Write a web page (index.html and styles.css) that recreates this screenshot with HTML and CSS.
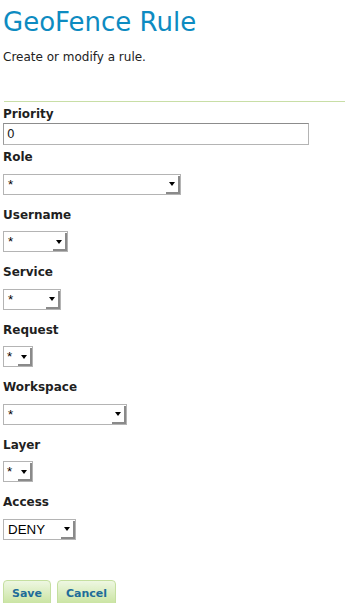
FILE: index.html
```html
<!DOCTYPE html>
<html lang="en">
<head>
    <meta charset="UTF-8">
    <meta name="viewport" content="width=device-width, initial-scale=1.0">
    <title>GeoFence Rule</title>
    <link rel="stylesheet" href="styles.css">
</head>
<body>
    <div id="page">
        <div id="page-header">
            <h1>GeoFence Rule</h1>
            <p class="description">Create or modify a rule.</p>
        </div>

        <form id="rule-form">
            <label class="field-label" for="priority">Priority</label>
            <input type="text" id="priority" class="text-input" value="0">

            <div class="field">
                <div class="field-label">Role</div>
                <div class="select role-select"><span class="value">*</span><span class="arrow"></span></div>
            </div>
            <div class="field">
                <div class="field-label">Username</div>
                <div class="select user-select"><span class="value">*</span><span class="arrow"></span></div>
            </div>
            <div class="field">
                <div class="field-label">Service</div>
                <div class="select service-select"><span class="value">*</span><span class="arrow"></span></div>
            </div>
            <div class="field">
                <div class="field-label">Request</div>
                <div class="select small-select"><span class="value">*</span><span class="arrow"></span></div>
            </div>
            <div class="field">
                <div class="field-label">Workspace</div>
                <div class="select workspace-select"><span class="value">*</span><span class="arrow"></span></div>
            </div>
            <div class="field">
                <div class="field-label">Layer</div>
                <div class="select small-select"><span class="value">*</span><span class="arrow"></span></div>
            </div>
            <div class="field">
                <div class="field-label">Access</div>
                <div class="select access-select"><span class="value">DENY</span><span class="arrow"></span></div>
            </div>

            <div class="buttons">
                <button type="button">Save</button>
                <button type="button">Cancel</button>
            </div>
        </form>
    </div>
</body>
</html>
```

FILE: styles.css
```css
* {
    box-sizing: border-box;
    margin: 0;
    padding: 0;
}

body {
    font-family: 'DejaVu Sans', Verdana, sans-serif;
    font-size: 12px;
    color: #222;
    background: white;
}

#page {
    padding: 0 0 0 3px;
}

#page-header {
    padding-top: 7px;
    padding-bottom: 36px;
    border-bottom: 1px solid #c8dea6;
    margin-left: 1px;
}

h1 {
    font-size: 26px;
    font-weight: normal;
    color: #0d8bc1;
    line-height: 30px;
    margin-left: -1px;
}

.description {
    margin-top: 12px;
    font-size: 12px;
    line-height: 16px;
    margin-left: -1px;
}

#rule-form {
    padding-top: 4px;
}

.field-label {
    display: block;
    font-weight: bold;
    font-size: 12px;
    line-height: 16px;
    color: #1f1f1f;
}

.text-input {
    display: block;
    width: 306px;
    height: 22px;
    margin-top: 1px;
    border: 1px solid #b4b4b4;
    border-top-color: #8c8c8c;
    border-left-color: #9a9a9a;
    padding: 0 3px;
    font-family: 'DejaVu Sans', sans-serif;
    font-size: 12px;
    color: #222;
    outline: none;
}

.field {
    margin-top: 12px;
}

.text-input + .field {
    margin-top: 4px;
}

.field .field-label {
    margin-bottom: 8.5px;
}

.select {
    display: flex;
    align-items: stretch;
    height: 21px;
    border: 1px solid #b4b4b4;
    background: white;
    font-family: 'Liberation Sans', Arial, sans-serif;
    font-size: 13.33px;
    color: #000;
}

.select .value {
    flex: 1;
    padding-left: 4px;
    line-height: 19px;
}

.select .arrow {
    width: 14px;
    margin: 1px 0 0 0;
    border-right: 2px solid #8a8a8a;
    border-bottom: 2px solid #8a8a8a;
    display: flex;
    align-items: center;
    justify-content: center;
}

.select .arrow::after {
    content: "";
    border-left: 3px solid transparent;
    border-right: 3px solid transparent;
    border-top: 4px solid #000;
    margin-top: 1px;
}

.role-select { width: 178px; }
.user-select { width: 65px; }
.service-select { width: 58px; }
.small-select { width: 30px; }
.workspace-select { width: 124px; }
.access-select { width: 73px; }

.small-select .value {
    padding-left: 3px;
}

.buttons {
    display: flex;
    gap: 6px;
    margin-top: 40px;
}

button {
    font-family: 'DejaVu Sans', sans-serif;
    font-weight: bold;
    font-size: 11px;
    color: #1e6c99;
    background: linear-gradient(#eef7e2, #c6e29b);
    border: 1px solid #c5dfa0;
    border-radius: 4px 4px 0 0;
    padding: 0 8px;
    height: 27px;
    line-height: 25px;
}
```
